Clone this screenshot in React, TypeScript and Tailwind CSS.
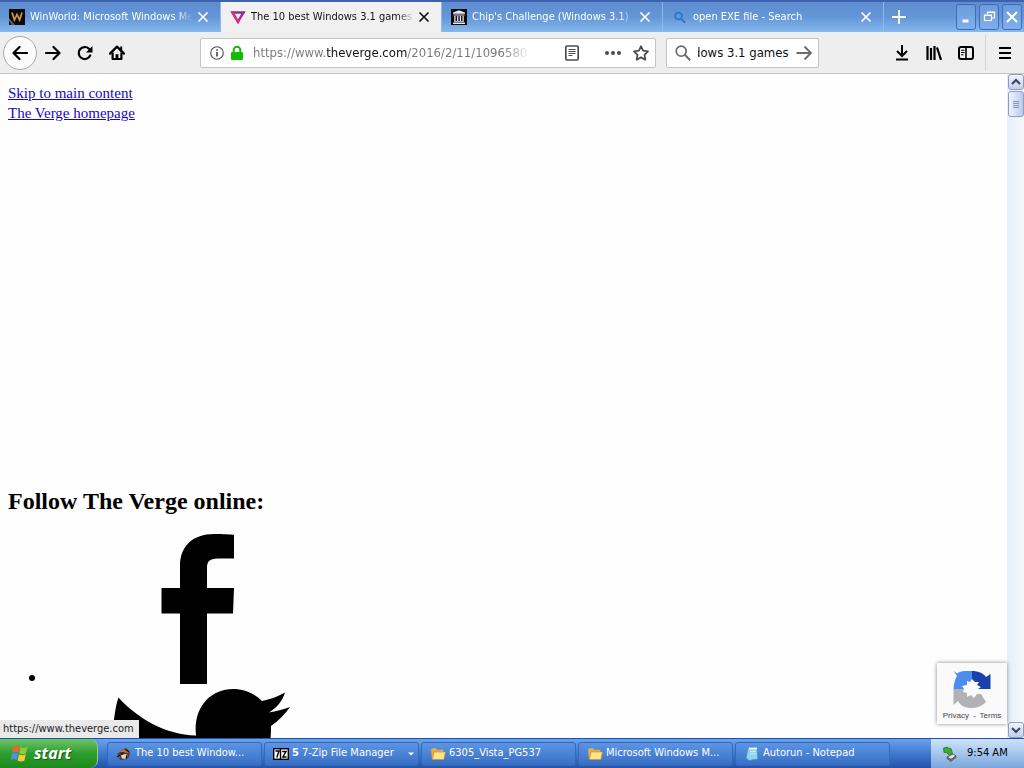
import { useState } from "react";
import type { ReactNode } from "react";

type IconProps = { children: ReactNode; size?: string; box?: string };

function Icon({ children, size = "size-4", box = "0 0 16 16" }: IconProps) {
  return (
    <svg className={`${size} shrink-0`} viewBox={box} fill="none" stroke="currentColor" aria-hidden="true">
      {children}
    </svg>
  );
}

const CloseGlyph = () => (
  <Icon size="size-3" box="0 0 12 12">
    <path d="M1.5 1.5l9 9M10.5 1.5l-9 9" strokeWidth="1.7" />
  </Icon>
);

const WinWorldIcon = () => (
  <Icon>
    <rect width="16" height="16" fill="#0c0a08" stroke="none" />
    <path d="M3 3.500l2.400 7.500L8 5.500l2.600 5.500L13 3.500" stroke="#c99a45" strokeWidth="1.700" />
    <path d="M0 9l6 7H3L0 12z" fill="#56636e" stroke="none" />
  </Icon>
);

const VergeIcon = () => (
  <Icon>
    <path d="M.5 2.500h15L8 15z" fill="#b02a8c" stroke="none" />
    <path d="M.5 2.500h15l-1.200 2H4.200z" fill="#6b3a9c" stroke="none" />
    <path d="M.5 2.500L8 15l1.600-2.700L4 2.500z" fill="#d02c8d" stroke="none" />
    <path d="M4.800 4.800h6.400L8 10.600z" fill="#f2eef2" stroke="none" />
  </Icon>
);

const ArchiveIcon = () => (
  <Icon>
    <rect width="16" height="16" fill="#0b0b0f" stroke="none" />
    <path d="M8 1.200L2 3.600v1.200h12V3.600zM2.500 5.500h11v1h-11zM2 13.600h12V15H2zM3 12.300h10v.8H3z" fill="#e8e8ec" stroke="none" />
    <path d="M3.900 7v5M6.700 7v5M9.400 7v5M12.100 7v5" stroke="#e8e8ec" strokeWidth="1.300" />
  </Icon>
);

const BlueSearchIcon = () => (
  <Icon>
    <circle cx="6.500" cy="7" r="3.400" stroke="#2379c8" strokeWidth="1.700" />
    <path d="M9 9.600l4 4" stroke="#2379c8" strokeWidth="2" />
  </Icon>
);

const tabs = [
  { title: "WinWorld: Microsoft Windows Me", icon: <WinWorldIcon />, active: false },
  { title: "The 10 best Windows 3.1 games", icon: <VergeIcon />, active: true },
  { title: "Chip's Challenge (Windows 3.1) :", icon: <ArchiveIcon />, active: false },
  { title: "open EXE file - Search", icon: <BlueSearchIcon />, active: false },
];

function TabBar() {
  return (
    <header className="flex h-8 shrink-0 items-stretch border-t-2 border-[#3c62b0] bg-linear-to-b from-[#5f8dd0] via-[#6396d8] to-[#86b8ec] text-white">
      <nav className="flex min-w-0 flex-1" aria-label="Tabs">
        {tabs.map((t) => (
          <div
            key={t.title}
            className={`flex min-w-0 max-w-[221px] flex-1 items-center border-r border-[#8fb8ea] pr-[11px] pl-[9px] ${
              t.active ? "bg-[#f0f0f0] text-[#111]" : ""
            }`}
          >
            <button className="flex min-w-0 flex-1 items-center gap-[5px] text-left">
              {t.icon}
              <span className="min-w-0 flex-1 overflow-hidden mask-r-from-90% text-[11px] whitespace-nowrap">
                {t.title}
              </span>
            </button>
            <button className="ml-1 flex h-5 w-3 items-center justify-center" aria-label="Close tab">
              <CloseGlyph />
            </button>
          </div>
        ))}
        <button className="flex w-[30px] items-center justify-center" aria-label="New tab">
          <Icon>
            <path d="M8 1v14M1 8h14" strokeWidth="1.800" />
          </Icon>
        </button>
      </nav>
      <div className="flex items-center gap-[3px] pr-0.5">
        <WindowButton label="Minimize">
          <path d="M4.500 12h6" strokeWidth="3" />
        </WindowButton>
        <WindowButton label="Restore">
          <path d="M6.500 5V3h7v6H11M3.500 6h7v5.500h-7zM3.500 6.500h7M6.500 3.500h7" strokeWidth="1.200" />
        </WindowButton>
        <WindowButton label="Close">
          <path d="M3 3l10 10M13 3L3 13" strokeWidth="2" />
        </WindowButton>
      </div>
    </header>
  );
}

function WindowButton({ label, children }: { label: string; children: ReactNode }) {
  return (
    <button
      aria-label={label}
      className="flex h-[26px] w-5 items-center justify-center rounded-[3px] border border-[#3e6cba] bg-linear-to-b from-[#6f9bdc] to-[#7db0ea]"
    >
      <Icon>{children}</Icon>
    </button>
  );
}

function ToolButton({ label, children }: { label: string; children: ReactNode }) {
  return (
    <button aria-label={label} className="flex h-8 w-8 items-center justify-center">
      <Icon>{children}</Icon>
    </button>
  );
}

function Toolbar() {
  const [url, setUrl] = useState("https://www.theverge.com/2016/2/11/1096580");
  const [query, setQuery] = useState("dows 3.1 games");
  return (
    <div className="flex h-[42px] shrink-0 items-center border-b border-[#c4c4c4] bg-[#eeeeef] text-black">
      <div className="flex w-[200px] shrink-0 items-center pl-[3px]">
        <button
          aria-label="Back"
          className="flex size-[34px] items-center justify-center rounded-full border border-[#aaa] bg-[#fbfbfb]"
        >
          <Icon>
            <path d="M15 8H1.500M7.500 2L1.500 8l6 6" strokeWidth="2.200" strokeLinecap="round" strokeLinejoin="round" />
          </Icon>
        </button>
        <ToolButton label="Forward">
          <path d="M1 8h13.500M8.500 2l6 6-6 6" strokeWidth="2.200" strokeLinecap="round" strokeLinejoin="round" />
        </ToolButton>
        <ToolButton label="Reload">
          <path d="M13.200 10.500A6 6 0 1 1 12 3.800" strokeWidth="2.200" strokeLinecap="round" />
          <path d="M15.500 1v6.500H9z" fill="currentColor" stroke="none" />
        </ToolButton>
        <ToolButton label="Home">
          <path d="M1 8.600L8 1.600l7 7" strokeWidth="2.200" strokeLinecap="round" strokeLinejoin="round" />
          <path d="M3.600 7.500V14h8.800V7.500" strokeWidth="2.200" strokeLinejoin="round" />
          <path d="M8 14V9.200" strokeWidth="2.800" />
          <path d="M12.200 1.500v4" strokeWidth="2" />
        </ToolButton>
      </div>
      <div className="flex h-[30px] min-w-0 flex-1 items-center rounded-[2px] border border-[#c4c4c4] bg-white pr-1.5 pl-2 text-[#4c4c4c]">
        <Icon>
          <circle cx="8" cy="8" r="6.300" strokeWidth="1.100" />
          <path d="M8 7v4.500M8 4.200v1.600" strokeWidth="1.700" />
        </Icon>
        <span className="ml-1 flex">
          <Icon>
            <path d="M4.700 8V5a3.300 3.300 0 0 1 6.600 0v3" stroke="#12bc00" strokeWidth="2" />
            <rect x="2" y="7" width="12" height="8" rx="1" fill="#12bc00" stroke="none" />
          </Icon>
        </span>
        <input
          aria-label="Address"
          value={url}
          onChange={(e) => setUrl(e.target.value)}
          className="ml-2 min-w-0 flex-1 bg-[linear-gradient(90deg,#777_0_73px,#111_73px_154px,#777_154px_250px,transparent_278px)] bg-clip-text text-[13px] text-transparent outline-none"
        />
        <span className="ml-8 flex items-center">
          <Icon>
            <rect x="1.800" y="1" width="12.400" height="14" rx="1.400" strokeWidth="1.700" />
            <path d="M4.500 4.500h7M4.500 6.500h7M4.500 8.500h7M4.500 10.500h4" strokeWidth="1" />
          </Icon>
        </span>
        <button aria-label="Page actions" className="ml-[25px]">
          <Icon>
            <circle cx="2" cy="8" r="2" fill="currentColor" stroke="none" />
            <circle cx="8" cy="8" r="2" fill="currentColor" stroke="none" />
            <circle cx="14" cy="8" r="2" fill="currentColor" stroke="none" />
          </Icon>
        </button>
        <button aria-label="Bookmark" className="ml-3">
          <Icon>
            <path d="M8 1.300l2.100 4.400 4.900.7-3.500 3.400.8 4.900L8 12.400l-4.300 2.300.8-4.900L1 6.400l4.900-.7z" strokeWidth="1.800" strokeLinejoin="round" />
          </Icon>
        </button>
      </div>
      <div className="ml-2.5 flex h-[30px] w-[153px] shrink-0 items-center rounded-[2px] border border-[#c4c4c4] bg-white pr-1.5 pl-2 text-[#6a6a6a]">
        <Icon>
          <circle cx="6.200" cy="6.200" r="5" strokeWidth="1.700" />
          <path d="M9.800 9.800l5.400 5.400" strokeWidth="2" />
        </Icon>
        <input
          aria-label="Search"
          value={query}
          onChange={(e) => setQuery(e.target.value)}
          className="ml-[7px] min-w-0 flex-1 -indent-[5px] text-[13px] text-[#111] outline-none"
        />
        <button aria-label="Search now">
          <Icon>
            <path d="M.5 8H15M8.500 1.500L15 8l-6.500 6.500" strokeWidth="1.900" />
          </Icon>
        </button>
      </div>
      <div className="ml-[67px] flex shrink-0 items-center">
        <ToolButton label="Downloads">
          <path d="M8 0v10.500M3 6l5 5 5-5" strokeWidth="2" />
          <path d="M2 14.500h12" strokeWidth="2" />
        </ToolButton>
        <ToolButton label="Library">
          <path d="M1.500 1v14M5 3v12M8.500 1v14M11 2.500L15 14.800" strokeWidth="2.200" />
        </ToolButton>
        <ToolButton label="Sidebars">
          <rect x="1" y="2" width="14" height="12" rx="2" strokeWidth="2" />
          <path d="M8 2v12" strokeWidth="1.600" />
          <path d="M3 5.300h3.500M3 7.500h3.500M3 9.700h2.500" strokeWidth="1.100" />
        </ToolButton>
        <div className="ml-[3px] flex h-9 w-[39px] items-center justify-center border-l border-[#d4d4d4]">
          <button aria-label="Menu">
            <Icon>
              <path d="M2 3h12M2 8h12M2 13h12" strokeWidth="2" />
            </Icon>
          </button>
        </div>
      </div>
    </div>
  );
}

function FacebookMark() {
  return (
    <svg className="inline h-[150px] w-[300px] align-baseline" viewBox="0 0 300 150" role="img" aria-label="Facebook">
      <path d="M132 150V79.500H113.500V54H132V32C132 12 145 0 166 0C176 0 183 .5 186 .8V24.500H170C161 24.500 159 28 159 34V54H186L185 79.500H159V150z" />
    </svg>
  );
}

function TwitterMark() {
  return (
    <svg className="inline h-[150px] w-[300px] align-baseline" viewBox="0 0 300 150" role="img" aria-label="Twitter">
      <path d="M70.500 8.500C88 28 117 46 148 46.500C145 19 162 0 185 0C196 0 206 4 214 12C222 10.500 230 7.500 237 3.500C234.500 12 229 18.500 221 23.500C228 22.500 235 20.500 242 18C237 25 231 31.500 223 37C224 95 182 144 119 144C98 144 78 138 62 128C80 130 100 125 115 114C99 113 86 103 81 88C86 89 92 89 97 87C80 83 65 69 65 51C65 50 65 24 70.500 8.500z" />
    </svg>
  );
}

function Chevron({ up = false }: { up?: boolean }) {
  return (
    <button
      aria-label={up ? "Scroll up" : "Scroll down"}
      className="flex h-4 w-4 items-center justify-center rounded-[3px] border border-[#8d9cc0] bg-linear-to-b from-[#f1f5fd] to-[#c2cfe9] text-[#3f4660]"
    >
      <Icon size="size-2.5" box="0 0 10 10">
        <path d={up ? "M1 7l4-4 4 4" : "M1 3l4 4 4-4"} strokeWidth="2.200" />
      </Icon>
    </button>
  );
}

function ScrollBar() {
  return (
    <div className="flex w-[17px] shrink-0 flex-col items-center bg-linear-to-r from-[#e6eef9] to-[#f4f8fd]">
      <Chevron up />
      <button
        aria-label="Scroll position"
        className="mt-px flex h-[26px] w-4 items-center justify-center rounded-[3px] border border-[#8d9cc0] bg-linear-to-r from-[#eef4fe] to-[#bccbea] text-[#8594b8]"
      >
        <Icon size="size-2.5" box="0 0 10 10">
          <path d="M2 2.500h6M2 4.500h6M2 6.500h6M2 8.500h6" strokeWidth="1" />
        </Icon>
      </button>
      <div className="flex-1" />
      <Chevron />
    </div>
  );
}

function RecaptchaMark() {
  return (
    <svg className="size-10 shrink-0" viewBox="0 0 40 40" aria-hidden="true">
      <path d="M1.500 2L5 4.500C9 2 12 2 15 2H20V10L18 13L15 12L15 16L10 17L12 20H1.500C2 14 3 10 5 7z" fill="#4a8cf0" />
      <path d="M20 2C26 2 31 4 34 8L38.500 5V20H26L29 18L25 16L27 13L23 13L20 10z" fill="#1b3fae" />
      <path d="M1.500 20H12L11 23L15 24L15 28L19 26L22 29L25 25L29 25L34 33C30 37 25 39 20 39C13 39 9 37 6 32L1.500 36z" fill="#b2b2b4" />
    </svg>
  );
}

function Page() {
  return (
    <div className="relative flex min-h-0 flex-1 bg-[#fefefe]">
      <main className="min-w-0 flex-1 overflow-hidden px-2 pt-[9px] font-['Liberation_Serif',serif] text-[15px] leading-5 text-black">
        <div>
          <a href="#main" className="text-[#1408c8] underline">
            Skip to main content
          </a>
        </div>
        <div>
          <a href="#home" className="text-[#1408c8] underline">
            The Verge homepage
          </a>
        </div>
        <h2 className="mt-[364px] text-2xl leading-7 font-bold">Follow The Verge online:</h2>
        <ul className="mt-[19px] list-disc pl-10">
          <li className="marker:text-[20px]">
            <a href="#facebook">
              <FacebookMark />
            </a>
            <br />
            <a href="#twitter">
              <TwitterMark />
            </a>
          </li>
        </ul>
      </main>
      <ScrollBar />
      <div className="absolute bottom-0 left-0 bg-[#e9e9ea] pr-[5px] pl-[3px] text-[11px] leading-[18px] text-[#222]">
        https://www.theverge.com
      </div>
      <aside className="absolute right-[17px] bottom-[14px] flex h-[61px] w-[70px] flex-col items-center overflow-hidden bg-[#fafafa] pt-1.5 shadow-[0_0_4px_#888]">
        <RecaptchaMark />
        <p className="flex gap-1 font-['Liberation_Sans',sans-serif] text-[8px] leading-[14px] text-[#444]">
          <a href="#privacy">Privacy</a>
          <span>-</span>
          <a href="#terms">Terms</a>
        </p>
      </aside>
    </div>
  );
}

const FirefoxIcon = () => (
  <Icon>
    <path d="M1 8l3-2 3-3 4-.5 3 3.500-1 5-3 2-5 1-2-1 1-3z" fill="#5c3a26" stroke="none" />
    <path d="M3 6l4-2.500 4-.5 3 3-3 1-5-1z" fill="#c0703c" stroke="none" />
    <path d="M5 9.500l4-1.500 3 1-2 4-4-.5z" fill="#e3d8c8" stroke="none" />
    <path d="M5 8l3-1.500M9 3l4 3M11 9l-1 4M1 11l3-2" stroke="#191412" strokeWidth="1.300" />
  </Icon>
);

const SevenZipIcon = () => (
  <Icon>
    <rect x=".7" y="2.700" width="14.600" height="10.600" fill="#fff" stroke="#000" strokeWidth="1.400" />
    <path d="M2.500 5h3.500L3.800 11.500M9.200 5.500h3.800L9.800 11h3.800M7.500 3v10" stroke="#000" strokeWidth="1.400" />
  </Icon>
);

const FolderIcon = () => (
  <Icon>
    <path d="M1 3.500l1-1.300h4l1.300 1.500h6V13H2z" fill="#e2ae45" stroke="none" />
    <path d="M2.500 13.500L4 6h11.500l-1.700 7.500z" fill="#fde58b" stroke="#c99022" strokeWidth=".7" />
  </Icon>
);

const NotepadIcon = () => (
  <Icon>
    <path d="M4 2h9l1 11-9 1.500L2 12z" fill="#8fd3ee" stroke="#4690b4" strokeWidth=".8" />
    <path d="M5 2.500h8" stroke="#eefaff" strokeWidth="1.800" />
    <path d="M6 5.500l6-.2M6 8l6-.2" stroke="#c9eefb" strokeWidth="1" />
  </Icon>
);

const tasks = [
  { label: "The 10 best Window...", icon: <FirefoxIcon />, count: "", menu: false },
  { label: "7-Zip File Manager", icon: <SevenZipIcon />, count: "5", menu: true },
  { label: "6305_Vista_PG537", icon: <FolderIcon />, count: "", menu: false },
  { label: "Microsoft Windows M...", icon: <FolderIcon />, count: "", menu: false },
  { label: "Autorun - Notepad", icon: <NotepadIcon />, count: "", menu: false },
];

function TaskBar() {
  return (
    <footer className="flex h-[30px] shrink-0 items-stretch border-t border-[#1d4fae] bg-linear-to-b from-[#6aa2ea] via-[#4079cf] to-[#2353a8] text-white">
      <button className="flex w-[98px] shrink-0 items-center gap-1 rounded-r-lg border-r border-[#8fd08a] bg-linear-to-b from-[#6cc468] via-[#2c9d2c] to-[#1d8a1d] pl-2.5">
        <Icon size="size-5" box="0 0 20 20">
          <path d="M3.500 2.500c2-1.500 4-1.500 6 0l-1.300 6.200c-2-1.300-4-1.300-6 0z" fill="#ef6331" stroke="none" />
          <path d="M10.500 3c2 1.300 4.500 1.300 7 0l-1.500 6.200c-2 1.400-4.500 1.400-6.800 0z" fill="#8ccc3c" stroke="none" />
          <path d="M2 9.800c2-1.300 4-1.300 6 0L6.700 16c-2-1.300-4-1.300-6 0z" fill="#4f8df0" stroke="none" />
          <path d="M9 10.300c2 1.300 4.500 1.300 6.800 0l-1.400 6.200c-2.200 1.300-4.500 1.300-6.800 0z" fill="#fccc38" stroke="none" />
        </Icon>
        <span className="pb-0.5 font-['Open_Sans',sans-serif] text-base leading-6 font-bold italic [text-shadow:1px_1px_1px_#1a5a1a]">
          start
        </span>
      </button>
      <div className="flex min-w-0 flex-1 items-center gap-0.5 pr-10 pl-[9px]">
        {tasks.map((t) => (
          <button
            key={t.label}
            className="flex h-6 max-w-[155px] min-w-0 flex-1 items-center rounded-[3px] border border-[#3567bb] bg-linear-to-b from-[#5c95e4] to-[#386fc6] pr-1 pl-2 text-[11px]"
          >
            {t.icon}
            {t.count && <b className="ml-[3px]">{t.count}</b>}
            <span className="ml-[3px] flex-1 overflow-hidden text-left whitespace-nowrap">{t.label}</span>
            {t.menu && (
              <Icon size="size-1.5" box="0 0 6 6">
                <path d="M0 1.500h6L3 4.500z" fill="currentColor" stroke="none" />
              </Icon>
            )}
          </button>
        ))}
      </div>
      <div className="flex w-[93px] shrink-0 items-center gap-[9px] bg-linear-to-b from-[#cfe2f8] via-[#a4c6ee] to-[#7da6dc] pl-[11px] text-[11px] text-black">
        <Icon>
          <path d="M5 11l6-3 3 2-5 3.500z" fill="#e4e4dc" stroke="#444" strokeWidth=".8" />
          <path d="M5 11v1.500l4 3 5-4V10l-5 3.500z" fill="#777" stroke="#444" strokeWidth=".6" />
          <path d="M1.500 2l4-1 .5 1 3 .5 1.500 5L7 9 4.500 6.500 2 6.500z" fill="#3bab31" stroke="#1d701a" strokeWidth=".7" />
        </Icon>
        <time className="whitespace-nowrap">9:54 AM</time>
      </div>
    </footer>
  );
}

export default function App() {
  return (
    <div className="flex h-screen flex-col overflow-hidden bg-white font-['Tahoma','DejaVu_Sans_Condensed','Noto_Sans',sans-serif]">
      <TabBar />
      <Toolbar />
      <Page />
      <TaskBar />
    </div>
  );
}
